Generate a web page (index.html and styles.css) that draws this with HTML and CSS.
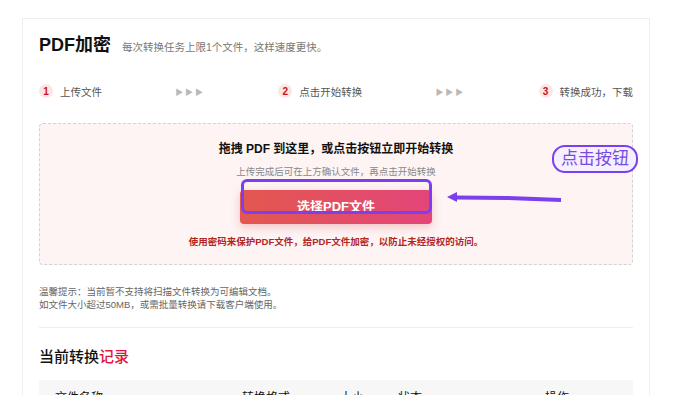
FILE: index.html
```html
<!DOCTYPE html>
<html lang="zh-CN">
<head>
    <meta charset="UTF-8">
    <meta name="viewport" content="width=device-width, initial-scale=1.0">
    <title>PDF加密</title>
    <link rel="stylesheet" href="styles.css">
</head>
<body>

<div class="tool-card">
    <div class="tool-head">
        <h1>PDF加密</h1>
        <span class="tool-desc">每次转换任务上限1个文件，这样速度更快。</span>
    </div>

    <div class="steps">
        <div class="step"><span class="step-num">1</span>上传文件</div>
        <div class="step-arrows">▶▶▶</div>
        <div class="step"><span class="step-num">2</span>点击开始转换</div>
        <div class="step-arrows">▶▶▶</div>
        <div class="step"><span class="step-num">3</span>转换成功，下载</div>
    </div>

    <div class="drop-zone">
        <div class="drop-title">拖拽 PDF 到这里，或点击按钮立即开始转换</div>
        <div class="drop-sub">上传完成后可在上方确认文件，再点击开始转换</div>
        <div class="btn-wrap">
            <button class="select-btn">选择PDF文件</button>
            <span class="highlight-box"></span>
        </div>
        <div class="drop-note">使用密码来保护PDF文件，给PDF文件加密，以防止未经授权的访问。</div>
    </div>

    <!-- annotation on top of the screenshot -->
    <span class="hint-pill">点击按钮</span>
    <svg class="hint-arrow" width="120" height="16" viewBox="0 0 120 16">
        <polygon points="0,6 10,1 10,4.5 60,5 114,7 114,11 60,9 10,8.5 10,11" fill="#7b3ff0"/>
    </svg>

    <div class="tips">
        温馨提示：当前暂不支持将扫描文件转换为可编辑文档。<br>
        如文件大小超过50MB，或需批量转换请下载客户端使用。
    </div>

    <div class="records">
        <h2>当前转换<span class="hl">记录</span></h2>
        <div class="table-head">
            <span class="col-name">文件名称</span>
            <span class="col-fmt">转换格式</span>
            <span class="col-size">大小</span>
            <span class="col-state">状态</span>
            <span class="col-op">操作</span>
        </div>
    </div>
</div>

</body>
</html>
```

FILE: styles.css
```css
body {
    margin: 0;
    background: #fff;
    font-family: "Liberation Sans", "Noto Sans CJK SC", sans-serif;
    color: #333;
}
.tool-card {
    position: relative;
    width: 594px;
    margin: 18px 0 0 22px;
    padding: 0 16px;
    border: 1px solid #efefef;
    border-bottom: none;
    height: 400px;
}
.tool-head {
    display: flex;
    align-items: baseline;
    padding-top: 11px;
    height: 24px;
}
.tool-head h1 {
    margin: 0 11px 0 0;
    font-size: 18px;
    font-weight: bold;
    color: #111;
}
.tool-desc {
    font-size: 10.5px;
    color: #777;
}
.steps {
    display: flex;
    justify-content: space-between;
    align-items: center;
    margin-top: 28px;
    height: 18px;
    font-size: 10.5px;
    color: #555;
}
.step {
    display: flex;
    align-items: center;
}
.step-num {
    display: inline-flex;
    align-items: center;
    justify-content: center;
    width: 14px;
    height: 14px;
    margin-right: 7px;
    border-radius: 50%;
    background: #fbe6e3;
    color: #c8141e;
    font-weight: bold;
    font-size: 10px;
}
.step-arrows {
    font-size: 8px;
    color: #b9b9b9;
    letter-spacing: 2px;
}
.drop-zone {
    margin-top: 23px;
    height: 140px;
    border: 1px dashed #d3d3d3;
    border-radius: 4px;
    background: #fdf4f3;
    display: flex;
    flex-direction: column;
    align-items: center;
}
.drop-title {
    margin-top: 15px;
    font-size: 12px;
    font-weight: bold;
    color: #111;
}
.drop-sub {
    margin-top: 8px;
    font-size: 9.5px;
    color: #888;
}
.btn-wrap {
    position: relative;
    margin-top: 12px;
}
.select-btn {
    display: block;
    width: 192px;
    height: 34px;
    padding: 0 0 3px;
    border: none;
    border-radius: 4px;
    background: linear-gradient(90deg, #e2584f, #e3457a);
    box-shadow: 0 3px 10px rgba(226, 80, 90, 0.3);
    color: #fff;
    font-family: "Liberation Sans", "Noto Sans CJK SC", sans-serif;
    font-size: 13px;
    font-weight: bold;
}
.highlight-box {
    position: absolute;
    left: 1px;
    top: -11px;
    width: 185px;
    height: 29px;
    border: 3px solid #7b3ff2;
    border-radius: 6px;
}
.drop-note {
    margin-top: 10px;
    font-size: 9.5px;
    font-weight: bold;
    color: #b3261e;
}
.hint-pill {
    position: absolute;
    left: 529px;
    top: 126px;
    padding: 0 7px;
    height: 24px;
    line-height: 23px;
    border: 2px solid #7b3ff2;
    border-radius: 13px;
    background: #f4f0ff;
    color: #7a4be0;
    font-size: 17px;
}
.hint-arrow {
    position: absolute;
    left: 424px;
    top: 172px;
}
.tips {
    margin-top: 20px;
    font-size: 9.5px;
    line-height: 13px;
    color: #666;
}
.records {
    margin-top: 16px;
    border-top: 1px solid #eee;
}
.records h2 {
    margin: 17px 0 0;
    font-size: 15px;
    font-weight: 500;
    color: #111;
}
.records .hl {
    color: #e0153d;
}
.table-head {
    display: flex;
    margin-top: 14px;
    height: 30px;
    padding-top: 8px;
    background: #f7f7f7;
    font-size: 12px;
    color: #111;
}
.col-name { padding-left: 16px; width: 187px; }
.col-fmt { width: 98px; }
.col-size { width: 58px; }
.col-state { width: 147px; }
```
